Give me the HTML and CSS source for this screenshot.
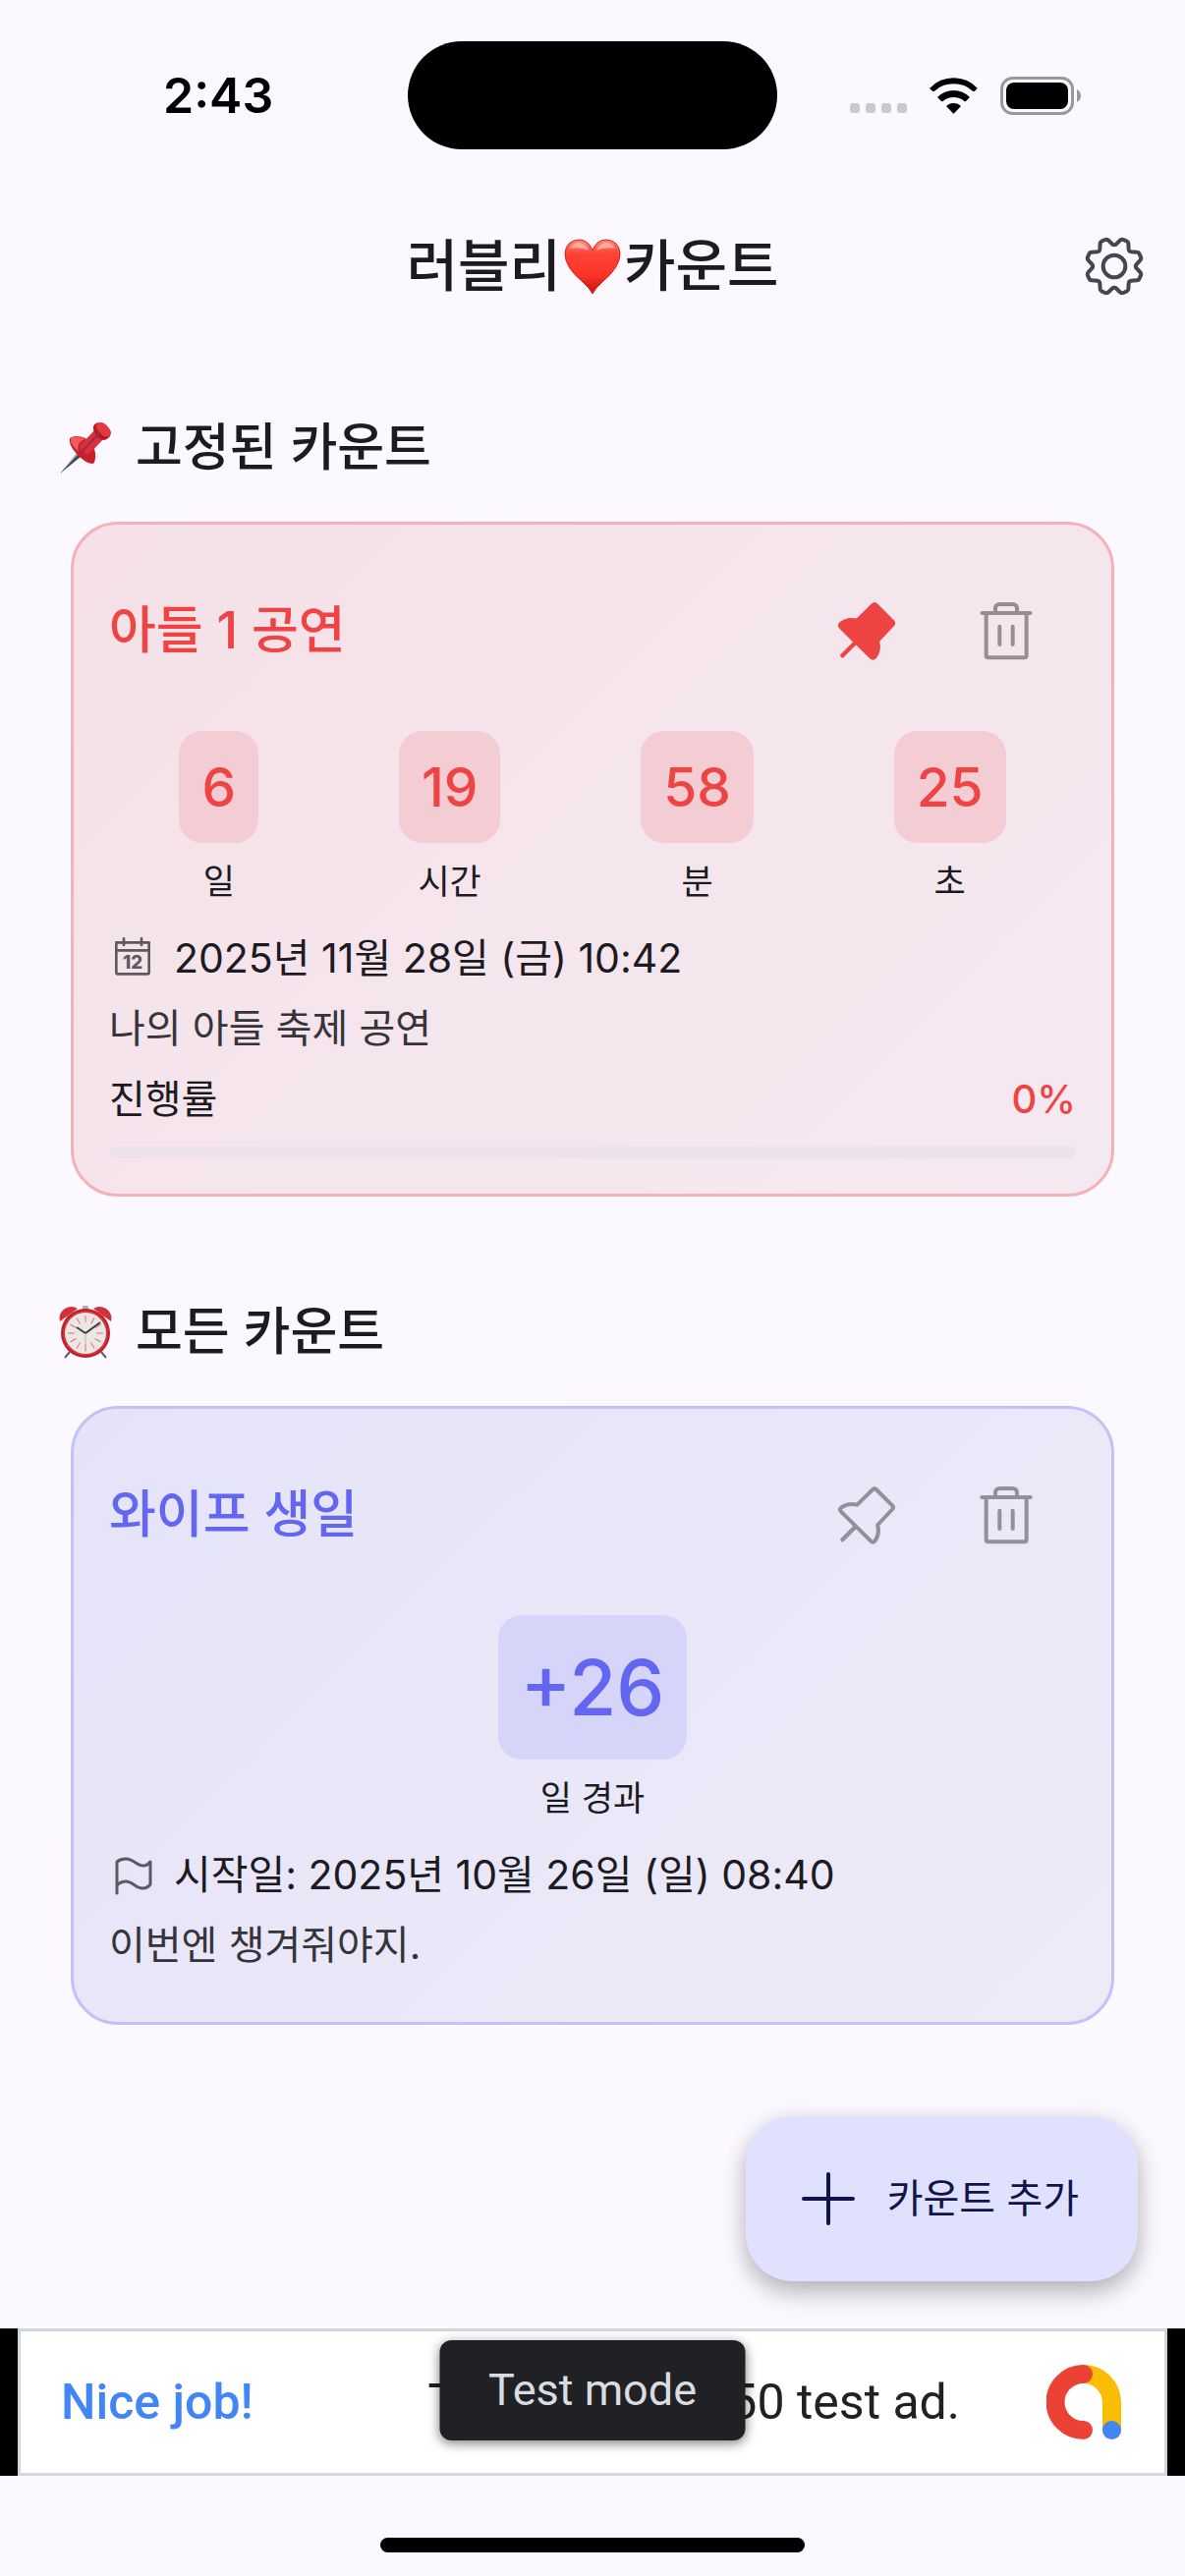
FILE: index.html
```html
<!DOCTYPE html>
<html lang="ko">
<head>
<meta charset="utf-8">
<meta name="viewport" content="width=device-width, initial-scale=1">
<title>러블리 카운트</title>
<link rel="stylesheet" href="styles.css">
</head>
<body>
<svg class="defs" aria-hidden="true">
  <defs>
    <symbol id="trash" viewBox="0 0 216 216">
      <path d="M37 54H185M50 54V184Q50 190 56 190H167Q173 190 173 184V54M78 54V41Q78 27 92 27H130Q144 27 144 41V54M91 95V150M131 95V150" fill="none" stroke="currentColor" stroke-width="12" stroke-linecap="round" stroke-linejoin="round"/>
    </symbol>
    <symbol id="pin" viewBox="0 0 216 216">
      <path d="M88 77L136 30Q141 25 146 30L196 80Q201 85 196 90L151 138Q150 140 151 142Q157 168 142 188Q136 194 130 188L38 97Q33 91 40 85Q60 70 88 77Z" stroke="currentColor" stroke-width="12" stroke-linejoin="round"/>
      <path d="M82 145L43 184" fill="none" stroke="currentColor" stroke-width="13" stroke-linecap="round"/>
    </symbol>
  </defs>
</svg>

<header class="status">
  <time class="status-time">2:43</time>
  <div class="island"></div>
  <div class="status-icons">
    <svg width="58" height="38" viewBox="0 0 58 38" fill="#cbc8cf"><rect y="27" width="10" height="10" rx="3"/><rect x="16" y="27" width="10" height="10" rx="3"/><rect x="32" y="27" width="10" height="10" rx="3"/><rect x="48" y="27" width="10" height="10" rx="3"/></svg>
    <svg width="51" height="38" viewBox="0 0 153 114"><path d="M4 37Q34 6 76.500 6T149 37L141 46Q138 48 135 46Q110 24 76.500 24T18 46Q15 48 12 46L1 36Z" transform="translate(0 -2)"/><path d="M27 63Q48 42 76.500 42T126 63L114 75Q112 77 109 75Q96 63 76.500 63T44 75Q41 77 39 75Z"/><path d="M54 90Q63 81 76.500 81T99 90L79 111Q76 114 74 111Z"/></svg>
    <svg width="82" height="39" viewBox="0 0 82 39"><rect x="1.500" y="1.500" width="72" height="36" rx="11" fill="none" stroke="#9a979e" stroke-width="3"/><rect x="6" y="6" width="63" height="27" rx="8"/><path d="M78 13Q82 15 82 19.500T78 26Z" fill="#9a979e"/></svg>
  </div>
</header>

<nav class="app-bar">
  <h1 class="app-title"><span>러블리</span><svg class="heart" viewBox="0 0 58 57" role="img" aria-label="하트"><defs><linearGradient id="hg" x1="0" y1="0" x2="0" y2="1"><stop offset="0" stop-color="#ff8f80"/><stop offset=".25" stop-color="#ff4335"/><stop offset=".65" stop-color="#fb3528"/><stop offset="1" stop-color="#c91208"/></linearGradient></defs><path d="M29 56Q26 50 19 44Q1 29 1 15Q2 2 15 1Q25 1 29 12Q33 1 43 1Q56 2 57 15Q57 29 39 44Q32 50 29 56Z" fill="url(#hg)" stroke="#e0190f" stroke-width="1"/><path d="M6 10Q10 3 16 4Q23 5 25 12Q16 8 6 10ZM33 12Q35 5 42 4Q48 3 52 10Q42 8 33 12Z" fill="#ffd0c8" opacity=".6"/></svg><span>카운트</span></h1>
  <button class="icon-button gear" type="button" aria-label="설정">
    <svg class="icon" viewBox="-108 -108 216 216" fill="none" stroke="currentColor" stroke-width="12" stroke-linejoin="round"><circle r="34"/><path d="M-5 -67Q0 -64 5 -67L19 -80Q23 -83 28 -81L39 -76Q43 -74 43 -70L44 -52Q45 -45 52 -44L70 -43Q74 -43 76 -39L81 -28Q83 -23 80 -19L67 -5Q64 0 67 5L80 19Q83 23 81 28L76 39Q74 43 70 43L52 44Q45 45 44 52L43 70Q43 74 39 76L28 81Q23 83 19 80L5 67Q0 64 -5 67L-19 80Q-23 83 -28 81L-39 76Q-43 74 -43 70L-44 52Q-45 45 -52 44L-70 43Q-74 43 -76 39L-81 28Q-83 23 -80 19L-67 5Q-64 0 -67 -5L-80 -19Q-83 -23 -81 -28L-76 -39Q-74 -43 -70 -43L-52 -44Q-45 -45 -44 -52L-43 -70Q-43 -74 -39 -76L-28 -81Q-23 -83 -19 -80Z"/></svg>
  </button>
</nav>

<main class="content">
  <section class="group">
    <h2 class="group-title">
      <svg class="emoji" viewBox="0 0 54 54" aria-hidden="true"><path d="M1 53L19 31L23 35Z" fill="#8fa9b8"/><path d="M1 53L21 32L23 35Z" fill="#41454d"/><path d="M11 17Q9 23 18 33Q27 43 35 43Q39 37 36 28L27 17Q17 13 11 17Z" fill="#c81f2a"/><path d="M21 25L37 8L46 17L30 34Q22 33 21 25Z" fill="#db3039"/><path d="M12 17Q10 22 20 31Q17 21 27 18Q18 14 12 17Z" fill="#ef5a5c"/><path d="M36 3Q42 -2 49 5Q56 12 50 17Q44 22 38 14Q33 8 36 3Z" fill="#b81722"/><path d="M39 2Q45 -1 50 6Q55 12 51 15Q46 17 41 11Q36 5 39 2Z" fill="#e23a40"/><path d="M22 32L42 11" stroke="#8f2f4c" stroke-width="2"/></svg>
      <span>고정된 카운트</span>
    </h2>
    <article class="card red">
      <div class="card-head">
        <h3 class="card-title">아들 1 공연</h3>
        <button class="icon-button pinned" type="button" aria-label="고정 해제"><svg class="icon"><use href="#pin"/></svg></button>
        <button class="icon-button" type="button" aria-label="삭제"><svg class="icon"><use href="#trash"/></svg></button>
      </div>
      <div class="counts">
        <div class="count"><b class="value">6</b><span class="unit">일</span></div>
        <div class="count"><b class="value">19</b><span class="unit">시간</span></div>
        <div class="count"><b class="value">58</b><span class="unit">분</span></div>
        <div class="count"><b class="value">25</b><span class="unit">초</span></div>
      </div>
      <p class="line date">
        <svg class="small-icon" viewBox="0 0 144 144" aria-hidden="true"><path d="M22 25H122V116Q122 121 117 121H27Q22 121 22 116ZM22 49H122M45 13V33M99 13V33" fill="none" stroke="currentColor" stroke-width="8" stroke-linejoin="round" stroke-linecap="round"/><text class="cal-text" x="72" y="106">12</text></svg>
        <span>2025년 11월 28일 (금) 10:42</span>
      </p>
      <p class="line memo">나의 아들 축제 공연</p>
      <div class="line progress-row"><label for="progress">진행률</label><b class="percent">0%</b></div>
      <progress id="progress" class="bar" value="0" max="100"></progress>
    </article>
  </section>

  <section class="group">
    <h2 class="group-title">
      <svg class="emoji" viewBox="0 0 54 54" aria-hidden="true"><path d="M11 47L6 53M43 47L48 53" stroke="#5d6066" stroke-width="2"/><rect x="24" y="0" width="6" height="5" rx="1" fill="#a9b0b8"/><path d="M1 16Q-1 8 6 3Q13 -1 19 3ZM53 16Q55 8 48 3Q41 -1 35 3Z" fill="#d2303b"/><circle cx="27" cy="28" r="25" fill="#b92029"/><circle cx="27" cy="28" r="23" fill="#d8323a"/><circle cx="27" cy="28" r="21" fill="#e9e8e6"/><g stroke="#ef6d6a" stroke-width="1"><path id="t" d="M27 10V17M27 39V46M9 28H16M38 28H45"/><use href="#t" transform="rotate(30 27 28)"/><use href="#t" transform="rotate(60 27 28)"/></g><path d="M18 22L27 28L42 17" fill="none" stroke="#3d3f42" stroke-width="2"/><path d="M27 28V47" stroke="#cfb68c" stroke-width="1"/></svg>
      <span>모든 카운트</span>
    </h2>
    <article class="card blue">
      <div class="card-head">
        <h3 class="card-title">와이프 생일</h3>
        <button class="icon-button unpinned" type="button" aria-label="고정"><svg class="icon"><use href="#pin"/></svg></button>
        <button class="icon-button" type="button" aria-label="삭제"><svg class="icon"><use href="#trash"/></svg></button>
      </div>
      <div class="counts">
        <div class="count"><b class="value large">+26</b><span class="unit">일 경과</span></div>
      </div>
      <p class="line date">
        <svg class="small-icon" viewBox="0 3 48 48" fill="none" stroke="currentColor" stroke-width="3" stroke-linecap="round" stroke-linejoin="round" aria-hidden="true"><path d="M8 46V14Q12 11 17 11C25 11 28 18 35 18Q39 18 42 14V37Q39 41 34 41C27 41 24 34 17 34Q12 34 8 38"/></svg>
        <span>시작일: 2025년 10월 26일 (일) 08:40</span>
      </p>
      <p class="line memo">이번엔 챙겨줘야지.</p>
    </article>
  </section>

  <button class="fab" type="button">
    <svg class="plus" viewBox="0 0 54 54" fill="none" stroke="currentColor" stroke-width="4" stroke-linecap="round" aria-hidden="true"><path d="M27 2V52M2 27H52"/></svg>
    <span>카운트 추가</span>
  </button>
</main>

<aside class="ad">
  <a class="ad-body" href="#">
    <span class="ad-praise">Nice job!</span>
    <span class="ad-text">This is a 320x50 test ad.</span>
    <svg class="ad-logo" viewBox="0 0 76 76" fill="none" stroke-width="19" stroke-linecap="round" aria-hidden="true"><path d="M37 9.500A29 29 0 0 1 66.500 38V66" stroke="#fbbc04"/><path d="M37.500 9.500A28.500 28.500 0 0 0 37.500 66.500" stroke="#ea4335"/><circle cx="66.500" cy="66.500" r="9.500" fill="#4285f4"/></svg>
  </a>
  <div class="toast" role="status">Test mode</div>
</aside>
<footer class="home"><div class="home-bar"></div></footer>
</body>
</html>
```
FILE: styles.css
```css
* { box-sizing: border-box; }

body {
  margin: 0;
  min-height: 100vh;
  display: flex;
  flex-direction: column;
  background: #fbf8ff;
  color: #1b1b21;
  font-family: Inter, "Noto Sans CJK KR", sans-serif;
  font-size: 40px;
  line-height: 60px;
}

h1, h2, h3, p { margin: 0; }

button {
  border: 0;
  padding: 0;
  background: none;
  color: inherit;
  font: inherit;
}

svg { display: block; flex: none; }

.defs { position: absolute; width: 0; height: 0; }

/* Status bar */
.status {
  height: 187px;
  padding-top: 42px;
  display: grid;
  grid-template-columns: 1fr 376px 1fr;
  align-items: start;
  color: #000;
}

.status-time {
  padding-left: 166px;
  font-size: 50px;
  font-weight: 600;
  line-height: 110px;
}

.island {
  height: 110px;
  border-radius: 55px;
  background: #000;
}

.status-icons {
  height: 110px;
  padding-right: 106px;
  display: flex;
  align-items: center;
  justify-content: flex-end;
  gap: 22px;
}

/* App bar */
.app-bar {
  height: 168px;
  display: grid;
  grid-template-columns: 1fr auto 1fr;
  align-items: center;
}

.app-title {
  grid-column: 2;
  display: flex;
  align-items: center;
  gap: 2px;
  font-size: 57px;
  font-weight: 500;
  line-height: 84px;
}

.heart { width: 60px; height: 57px; }

.icon-button {
  width: 144px;
  height: 144px;
  display: grid;
  place-items: center;
  color: #978e94;
}

.icon { width: 72px; height: 72px; }

.gear { justify-self: end; color: #46464f; }

/* Content */
.content {
  position: relative;
  flex: 1;
  padding: 62px 60px 0;
}

.group { margin-bottom: 99px; }

.group-title {
  height: 78px;
  margin-bottom: 36px;
  display: flex;
  align-items: center;
  gap: 24px;
  font-size: 52px;
  font-weight: 500;
  line-height: 78px;
}

.emoji { width: 54px; height: 54px; }

.card {
  margin: 0 12px;
  padding: 36px;
  border: 3px solid;
  border-radius: 48px;
}

.red {
  --accent: #ef4444;
  background: linear-gradient(135deg, #f5e1e7, #f5e9f1);
  border-color: #f5b1b6;
}

.blue {
  --accent: #6366f1;
  padding-bottom: 48px;
  background: linear-gradient(135deg, #e5e3f8, #eeebf8);
  border-color: #c2c1f8;
}

.blue .icon-button { color: #93909c; }

.card-head { display: flex; align-items: center; }

.card-title {
  flex: 1;
  color: var(--accent);
  font-size: 52px;
  font-weight: 500;
  line-height: 78px;
}

.card .pinned { color: var(--accent); fill: currentColor; }

.unpinned { fill: none; }

.counts {
  margin: 30px 0 24px;
  display: flex;
  justify-content: space-around;
}

.count {
  display: flex;
  flex-direction: column;
  align-items: center;
  gap: 15px;
}

.value {
  padding: 18px 23px;
  border-radius: 24px;
  color: var(--accent);
  font-size: 55px;
  font-weight: 500;
  line-height: 78px;
}

.red .value { background: #f4ccd3; }

.blue .value { background: #d6d4f8; }

.value.large {
  font-size: 78px;
  line-height: 111px;
}

.unit { font-size: 35px; line-height: 48px; }

.line + .line { margin-top: 12px; }

.date {
  display: flex;
  align-items: center;
  gap: 18px;
  font-size: 41px;
}

.small-icon { width: 48px; height: 48px; color: #5e585f; }

.cal-text {
  fill: currentColor;
  font-size: 56px;
  font-weight: 800;
  text-anchor: middle;
}

.memo { color: #34343a; }

.progress-row { display: flex; justify-content: space-between; }

.percent { color: var(--accent); font-weight: 500; }

.bar {
  appearance: none;
  display: block;
  width: 100%;
  height: 12px;
  margin-top: 18px;
  border: 0;
  border-radius: 6px;
  overflow: hidden;
  background: #ebe2ec;
}

.bar::-webkit-progress-bar { background: #ebe2ec; }

.fab {
  position: absolute;
  right: 48px;
  bottom: 48px;
  height: 168px;
  padding: 0 60px 0 57px;
  display: flex;
  align-items: center;
  gap: 33px;
  border-radius: 48px;
  background: #e0e0ff;
  box-shadow: 0 12px 24px rgba(0, 0, 0, .24), 0 2px 24px rgba(0, 0, 0, .08);
  color: #11144b;
}

.plus { width: 54px; height: 54px; }

/* Banner ad */
.ad {
  position: relative;
  padding: 0 18px;
  background: #000;
}

.ad-body {
  height: 150px;
  padding: 0 44px 0 41px;
  display: flex;
  align-items: center;
  gap: 88px;
  border: 3px solid #cfd8dc;
  background: #fff;
  color: #202124;
  font-family: Roboto, sans-serif;
  font-size: 50px;
  white-space: nowrap;
  text-decoration: none;
}

.ad-praise {
  margin-right: auto;
  color: #4285f4;
  font-weight: 500;
}

.ad-logo { width: 76px; height: 76px; }

.toast {
  position: absolute;
  top: 12px;
  left: 50%;
  width: 311px;
  transform: translateX(-50%);
  border-radius: 12px;
  background: #202124;
  box-shadow: 0 3px 12px rgba(0, 0, 0, .5);
  color: #dadce0;
  font-family: Roboto, sans-serif;
  font-size: 45px;
  line-height: 102px;
  text-align: center;
}

.home { height: 102px; padding-top: 63px; }

.home-bar {
  width: 432px;
  height: 15px;
  margin: 0 auto;
  border-radius: 8px;
  background: #000;
}
```
